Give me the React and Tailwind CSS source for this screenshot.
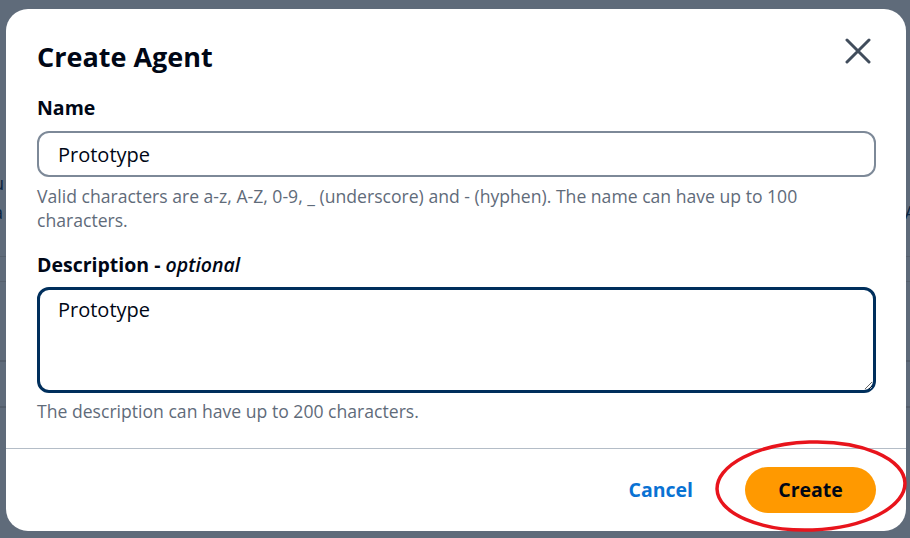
import { useState } from "react"

const font = { fontFamily: '"Open Sans", "Noto Sans", sans-serif' }

export default function App() {
  const [name, setName] = useState("Prototype")
  const [description, setDescription] = useState("Prototype")

  return (
    <div className="relative h-[538px] w-[910px] overflow-hidden bg-[#5f6b7a]" style={font}>
      {/* page behind the overlay */}
      <div className="flex h-full flex-col pt-[169px] text-[18px] text-[#0a2440]">
        <div className="flex h-[88px] justify-between border-b border-[#56606d] leading-[29px]">
          <div className="-ml-[7px] flex flex-col">
            <span>u</span>
            <span>a</span>
          </div>
          <div className="-mr-[6px] flex flex-col items-end">
            <span>l</span>
            <span>A</span>
          </div>
        </div>
        <div className="h-[25px] border-b border-[#56606d]"></div>
        <div className="h-[80px] border-b-2 border-[#545e6b]"></div>
        <div className="h-[46px] border-b-2 border-[#545e6b]"></div>
      </div>

      {/* modal */}
      <div className="absolute left-[6px] top-[9px] flex h-[522px] w-[900px] flex-col rounded-[22px] bg-white">
        <div className="flex items-start justify-between pl-[31px] pr-[35px] pt-[28px]">
          <h1 className="text-[27px] font-bold leading-[40px] text-[#000716]">Create Agent</h1>
          <button type="button" className="mt-[1px] text-[#414d5c]">
            <svg width="26" height="26" viewBox="0 0 26 26" fill="none" stroke="currentColor" strokeWidth="3" strokeLinecap="round">
              <path d="M2 2 L24 24 M24 2 L2 24" />
            </svg>
          </button>
        </div>

        <div className="flex flex-col pl-[31px] pr-[30px] pt-[17px]">
          <label className="text-[19.5px] font-bold leading-[28px] text-[#000716]">Name</label>
          <input
            value={name}
            onChange={(e) => setName(e.target.value)}
            className="mt-[9px] h-[46px] w-full rounded-[12px] border-2 border-[#7d8998] px-[19px] text-[20px] text-[#000716] outline-none"
          />
          <p className="mt-[7px] text-[17.6px] leading-[24px] text-[#5f6b7a]">
            Valid characters are a-z, A-Z, 0-9, _ (underscore) and - (hyphen). The name can have up to 100 characters.
          </p>

          <label className="mt-[19px] text-[19.5px] font-bold leading-[28px] text-[#000716]">
            Description - <span className="font-semibold italic">optional</span>
          </label>
          <textarea
            value={description}
            onChange={(e) => setDescription(e.target.value)}
            className="mt-[8px] h-[106px] w-full resize-y rounded-[12px] border-[3px] border-[#002f5c] px-[18px] pt-[6px] text-[20px] leading-[28px] text-[#000716] outline-none"
          />
          <p className="mt-[6px] text-[17.6px] leading-[24px] text-[#5f6b7a]">
            The description can have up to 200 characters.
          </p>
        </div>

        <div className="mt-[25px] border-t border-[#b4bdc7]"></div>

        <div className="flex items-center justify-end gap-[52px] pr-[30px] pt-[18px]">
          <button type="button" className="text-[19.5px] font-bold text-[#0972d3]">
            Cancel
          </button>
          <button
            type="button"
            className="h-[46px] w-[131px] rounded-full bg-[#ff9900] text-[19.5px] font-bold text-[#000716]"
          >
            Create
          </button>
        </div>
      </div>

      {/* hand-drawn annotation */}
      <svg className="pointer-events-none absolute left-[712px] top-[438px]" width="198" height="98" viewBox="0 0 198 98">
        <ellipse cx="99" cy="48" rx="94" ry="44" fill="none" stroke="#e8141c" strokeWidth="3.5" transform="rotate(-2 99 48)" />
      </svg>
    </div>
  )
}
